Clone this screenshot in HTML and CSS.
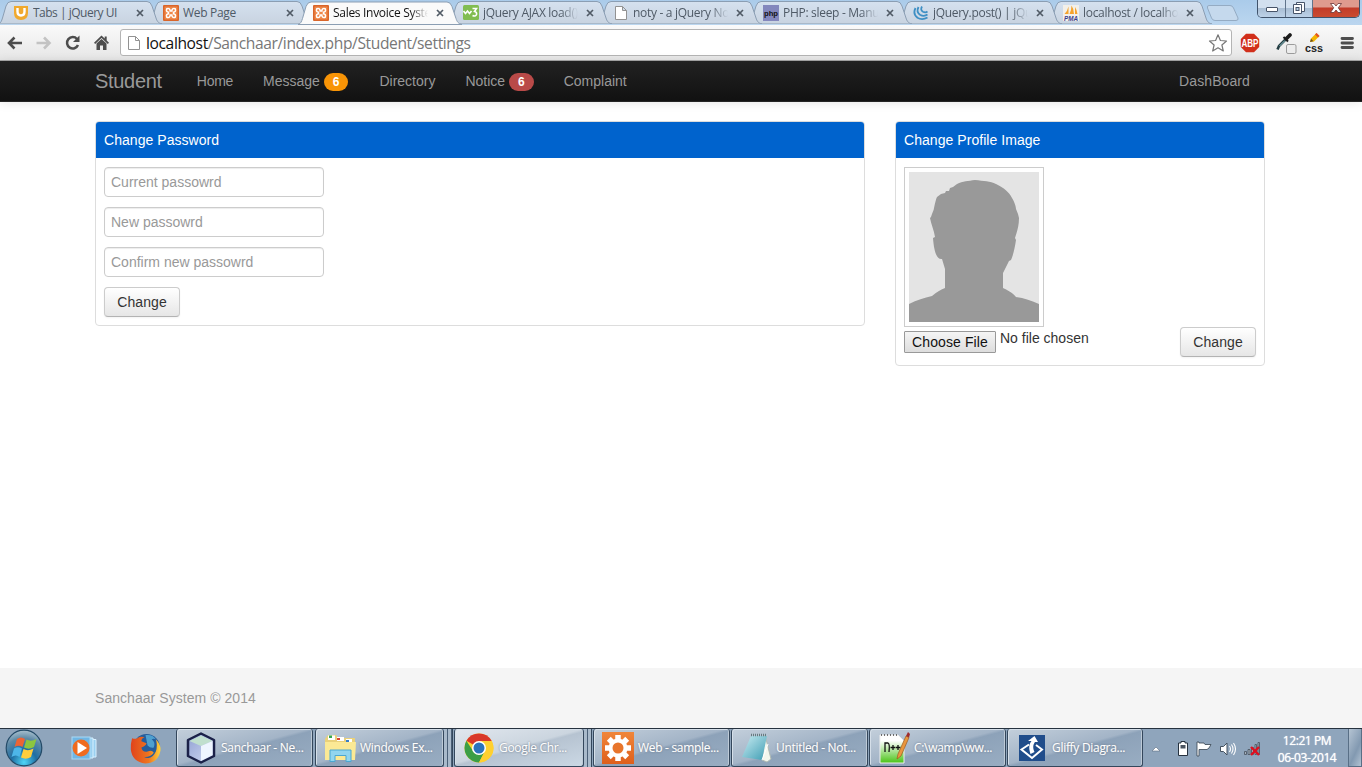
FILE: index.html
```html
<!DOCTYPE html>
<html lang="en">
<head>
<meta charset="utf-8">
<title>Sales Invoice System</title>
<link rel="stylesheet" href="styles.css">
</head>
<body>
<svg class="defs" width="0" height="0">
  <defs>
    <linearGradient id="tabfill" x1="0" y1="0" x2="0" y2="1"><stop offset="0" stop-color="#d5e1ef"/><stop offset="1" stop-color="#c8d3e0"/></linearGradient>
    <linearGradient id="orange" x1="0" y1="0" x2="0" y2="1"><stop offset="0" stop-color="#f0863a"/><stop offset="1" stop-color="#de5f1c"/></linearGradient>
    <radialGradient id="orb" cx=".5" cy=".9" r=".9"><stop offset="0" stop-color="#4fd6f7"/><stop offset=".4" stop-color="#1f6ea3"/><stop offset=".75" stop-color="#5f8aa6"/><stop offset="1" stop-color="#a9c0ce"/></radialGradient>
    <linearGradient id="fox" x1="0" y1="0" x2="1" y2="0"><stop offset="0" stop-color="#e0431c"/><stop offset=".6" stop-color="#ee7520"/><stop offset="1" stop-color="#ffd33a"/></linearGradient>
    <linearGradient id="note" x1="0" y1="0" x2="1" y2="1"><stop offset="0" stop-color="#c9ecf2"/><stop offset="1" stop-color="#3e9db3"/></linearGradient>
    <linearGradient id="green" x1="0" y1="0" x2="0" y2="1"><stop offset=".2" stop-color="#fff"/><stop offset="1" stop-color="#49c316"/></linearGradient>
    <linearGradient id="cube" x1="0" y1="0" x2="1" y2="1"><stop offset="0" stop-color="#8f9fd2"/><stop offset="1" stop-color="#d3dcf3"/></linearGradient>
    <symbol id="shape" viewBox="0 0 164 24"><path d="M0 24C3 23 3.500 21 4.500 18L8 6Q9.500 1.500 13 1.500H149Q152.500 1.500 154 6L158 18C159 21 160 23 164 24Z"/></symbol>
    <symbol id="x" viewBox="0 0 8 8"><path d="M1 1L7 7M7 1L1 7" stroke="currentColor" stroke-width="1.700" fill="none"/></symbol>
    <symbol id="xampp" viewBox="0 0 16 16"><rect width="16" height="16" rx="1" fill="#d9652a"/><rect x="1.500" y="1.500" width="13" height="13" fill="#ef8748"/><path d="M3.800 3.800C6 2.800 7 4 7.200 6H8.800C9 4 10 2.800 12.200 3.800C13.200 6 12 7 10.500 7.200V8.800C12 9 13.200 10 12.200 12.200C10 13.200 9 12 8.800 10H7.200C7 12 6 13.200 3.800 12.200C2.800 10 4 9 5.500 8.800V7.200C4 7 2.800 6 3.800 3.800Z" fill="none" stroke="#fff" stroke-width="1.500"/></symbol>
    <symbol id="file" viewBox="0 0 12 16"><path d="M.5 1.500H7.500L11.500 5.500V14.500H.5ZM7.500 1.500V5.500H11.500" fill="#fff" stroke="#929292"/></symbol>
  </defs>
</svg>

<header class="tabstrip">
  <div class="tab"><svg class="shape"><use href="#shape"/></svg>
    <svg class="fav" viewBox="0 0 16 16"><path d="M1 1H15V8Q15 15 8 15T1 8Z" fill="#f0a92e"/><path d="M4.500 3V6.500Q4.500 10.500 8 10.500T11.500 6.500V3" fill="none" stroke="#fff" stroke-width="2.400"/></svg>
    <span class="title tight">Tabs | jQuery UI</span><svg class="close"><use href="#x"/></svg></div>
  <div class="tab"><svg class="shape"><use href="#shape"/></svg>
    <svg class="fav"><use href="#xampp"/></svg><span class="title">Web Page</span><svg class="close"><use href="#x"/></svg></div>
  <div class="tab active"><svg class="shape"><use href="#shape"/></svg>
    <svg class="fav"><use href="#xampp"/></svg><span class="title fade">Sales Invoice System</span><svg class="close"><use href="#x"/></svg></div>
  <div class="tab"><svg class="shape"><use href="#shape"/></svg>
    <svg class="fav" viewBox="0 0 16 16"><rect width="16" height="15" rx="1.500" fill="#82bd51"/><path d="M.5 6L2.500 8.500L4.500 6L6.500 8.500L8.500 6M9.500 3.500H13.500L11.500 6.500Q14 7 13.500 9.500Q12.500 12 9.500 10.500" fill="none" stroke="#fff" stroke-width="1.600"/></svg>
    <span class="title fade">jQuery AJAX load()</span><svg class="close"><use href="#x"/></svg></div>
  <div class="tab"><svg class="shape"><use href="#shape"/></svg>
    <svg class="fav"><use href="#file"/></svg><span class="title fade">noty - a jQuery Not</span><svg class="close"><use href="#x"/></svg></div>
  <div class="tab"><svg class="shape"><use href="#shape"/></svg>
    <svg class="fav" viewBox="0 0 16 16"><rect width="16" height="16" fill="#8387bd"/><text x="1" y="10.500" textLength="14" lengthAdjust="spacingAndGlyphs" class="phpmark">php</text></svg>
    <span class="title fade">PHP: sleep - Manual</span><svg class="close"><use href="#x"/></svg></div>
  <div class="tab"><svg class="shape"><use href="#shape"/></svg>
    <svg class="fav" viewBox="0 0 16 16"><g fill="none" stroke="#3d8fc4" stroke-width="1.800"><path d="M2.500 3Q-.5 9 4.500 12.700Q9 15.500 14.500 12.500"/><path d="M5.500 2Q3 7 7 9.700Q11 12 14.500 9.500"/><path d="M9 1.500Q7 5 10 6.700Q12.500 8 14.500 6.500"/></g></svg>
    <span class="title fade">jQuery.post() | jQu</span><svg class="close"><use href="#x"/></svg></div>
  <div class="tab"><svg class="shape"><use href="#shape"/></svg>
    <svg class="fav" viewBox="0 0 16 16"><rect width="16" height="16" fill="#f3f0e9"/><path d="M1.500 9Q4.500 6 5.500 1.500V9ZM6.500 9Q8.500 5 8.500 .5Q11 4 11 9ZM12 9V2Q14 5 14.500 9Z" fill="#f5a32c"/><text x="1" y="15.500" textLength="14" lengthAdjust="spacingAndGlyphs" class="pmamark">PMA</text></svg>
    <span class="title fade">localhost / localho</span><svg class="close"><use href="#x"/></svg></div>
  <svg class="newtab" viewBox="0 0 34 18"><path d="M3 1.500H24Q26.500 1.500 27.500 4L32 14Q32.500 16.500 30 16.500H9Q6.500 16.500 5.500 14L1.500 4Q.8 1.500 3 1.500Z" fill="#c5d9ed" stroke="#94abc3"/></svg>
  <div class="winctl">
    <span class="wbtn min"><svg viewBox="0 0 14 14"><rect x="1.500" y="6.500" width="11" height="4" rx=".5" fill="#fff" stroke="#475469"/></svg></span>
    <span class="wbtn max"><svg viewBox="0 0 14 14"><path d="M4.500 1.500H12.500V10.500H4.500Z" fill="#fff" stroke="#475469"/><path d="M1.500 3.500H9.500V12.500H1.500Z" fill="#fff" stroke="#475469"/><rect x="4" y="6.500" width="3" height="3" fill="#bcd0e4" stroke="#475469"/></svg></span>
    <span class="wbtn quit"><svg viewBox="0 0 14 14"><path d="M1.500 2.500H5L7 5L9 2.500H12.500L9.300 6.800L12.500 11.500H9L7 9L5 11.500H1.500L4.700 6.800Z" fill="#fff" stroke="#6b3535" stroke-width=".8"/></svg></span>
  </div>
</header>

<div class="toolbar">
  <svg class="nav" viewBox="0 0 18 18"><path d="M17 9H4M9.500 3.500L4 9L9.500 14.500" fill="none" stroke="#4d4d4d" stroke-width="2.600"/></svg>
  <svg class="nav" viewBox="0 0 18 18"><path d="M2.500 9H15.500M10 3.500L15.500 9L10 14.500" fill="none" stroke="#c3c3c3" stroke-width="2.600"/></svg>
  <svg class="nav" viewBox="0 0 18 18"><path d="M14 5A5.700 5.700 0 1 0 15 11" fill="none" stroke="#4d4d4d" stroke-width="2.500"/><path d="M16.500 1.500V8H10Z" fill="#4d4d4d"/></svg>
  <svg class="nav" viewBox="0 0 18 18"><path d="M9.500 1.500L2 8.700L3.200 9.900L9.500 4L15.800 9.900L17 8.700L14.700 6.500V2.500H12.700V4.500ZM4.500 9.500L9.500 4.900L14.500 9.500V16H11V11.500H8V16H4.500Z" fill="#4d4d4d"/></svg>
  <div class="omnibox">
    <svg class="page"><use href="#file"/></svg>
    <span class="url"><b>localhost</b>/Sanchaar/index.php/Student/settings</span>
    <svg class="star" viewBox="0 0 20 20"><path d="M10 1.800L12.400 7.500L18.500 8L13.900 12L15.300 18L10 14.800L4.700 18L6.100 12L1.500 8L7.600 7.500Z" fill="#fff" stroke="#777" stroke-width="1.200" stroke-linejoin="round"/></svg>
  </div>
  <svg class="abp" viewBox="0 0 20 20"><path d="M6 .8H14L19.200 6V14L14 19.200H6L.8 14V6Z" fill="#d12f1b"/><text x="1.500" y="13.800" textLength="17" lengthAdjust="spacingAndGlyphs" class="abpmark">ABP</text></svg>
  <svg class="dropper" viewBox="0 0 22 22"><path d="M10.500 7.500L4 14L2.500 17.500" fill="none" stroke="#263f44" stroke-width="2.600"/><path d="M10 8.500L4.500 14" stroke="#8dc5cc" stroke-width="1"/><path d="M8.500 5L13 9.500" stroke="#1b1b1b" stroke-width="2"/><path d="M11.500 6.500L15 3" stroke="#1b1b1b" stroke-width="3.800" stroke-linecap="round"/><rect x="11.500" y="12.500" width="9.500" height="9" rx="1.500" fill="#ececec" stroke="#9b9b9b"/></svg>
  <svg class="css" viewBox="0 0 20 20"><path d="M6 9L7 5.500L12.500 0L15.500 3L10 8.500Z" fill="#f4b400"/><path d="M12.500 0L15.500 3L14 4.500L11 1.500Z" fill="#e2502d"/><path d="M6 9L7 5.800L9.500 8.200Z" fill="#6b501d"/><text x="1" y="18.500" textLength="18" lengthAdjust="spacingAndGlyphs" class="cssmark">css</text></svg>
  <svg class="menu" viewBox="0 0 14 14"><path d="M2 2.500H12.500M2 7H12.500M2 11.500H12.500" stroke="#4e4e4e" stroke-width="2.800" stroke-linecap="round"/></svg>
</div>

<nav class="navbar">
  <div class="container">
    <a class="brand">Student</a>
    <a class="link home">Home</a>
    <a class="link message">Message <span class="badge warn">6</span></a>
    <a class="link">Directory</a>
    <a class="link">Notice <span class="badge danger">6</span></a>
    <a class="link">Complaint</a>
    <a class="link right">DashBoard</a>
  </div>
</nav>

<main class="container content">
  <section class="panel wide">
    <h3>Change Password</h3>
    <form class="pad">
      <input type="password" placeholder="Current passowrd">
      <input type="password" placeholder="New passowrd">
      <input type="password" placeholder="Confirm new passowrd">
      <button type="button" class="btn">Change</button>
    </form>
  </section>
  <section class="panel narrow">
    <h3>Change Profile Image</h3>
    <div class="pad">
      <div class="thumb">
        <svg width="130" height="150" viewBox="0 0 130 150"><rect width="130" height="150" fill="#e4e4e4"/><path d="M0 132C8 128 15 126 23 124C28 120 31 118 36 116V97L33 87C28 88 25 80 24 66L26 65C25 58 22 52 21 46L22 45C23 41 25 38 25 36C26 31 27 27 28 25L32 22L36 21L37 19H40L41 16L44 15L48 12C54 9 59 9 66 8C75 9 81 9 87 12C95 16 100 20 103 26C106 31 107 35 107 37L109 42L110 46C110 54 108 60 106 66L107 68C106 75 104 84 102 88L100 89L94 101V116C98 118 103 120 107 125C115 126 123 129 130 132V150H0Z" fill="#999"/></svg>
      </div>
      <div class="upload">
        <span class="choose">Choose File</span><span class="nofile">No file chosen</span>
        <button type="button" class="btn">Change</button>
      </div>
    </div>
  </section>
</main>

<footer class="footer"><div class="container">Sanchaar System © 2014</div></footer>

<div class="taskbar">
  <div class="pins">
    <svg class="orb" viewBox="0 0 38 38"><circle cx="19" cy="19" r="17.800" fill="url(#orb)" stroke="#244b68" stroke-width="1.200"/><path d="M12 10Q16 7 20 10L17.500 18Q13.500 15.500 9.500 18Z" fill="#ed6434"/><path d="M21.500 10.500Q26 13 31.500 10L29 18Q24 21 19 18.500Z" fill="#8cc63f"/><path d="M9 19.500Q13 17 17 19.500L14.500 28Q11 25 6.500 28Z" fill="#4db6e9"/><path d="M18.500 20Q23 22.500 28.500 19.500L26 28Q21 31 16 28.500Z" fill="#ffce3c"/></svg>
    <svg class="wmp" viewBox="0 0 26 26"><path d="M18 3H22V23H18M22 4.500H25V22H22" fill="#9bd0f0" stroke="#d7f0ff"/><rect x="1" y="2" width="18" height="22" fill="#70b6e4" stroke="#a9d9f5"/><circle cx="10" cy="13" r="8.500" fill="#ef6b1f"/><path d="M6.500 7L16 13L6.500 19Z" fill="#fff"/></svg>
    <svg class="fox" viewBox="0 0 30 30"><circle cx="16" cy="14" r="13" fill="#255d9d"/><path d="M15 2Q22 1 25 6Q23 5 21 6Q25 9 23 14Q20 15 17 12Z" fill="#4fa0cf"/><path d="M2 5Q5 6 7 5Q10 3 14 4Q11 5 11 8L16 10Q15 13 11 14Q12 19 17 18Q21 16 23 19Q19 24 13 23Q21 27 25 18Q27 12 25 6Q30 11 29.500 17Q27 29.500 15 29.500Q2 28 .8 16Q.5 10 2 5Z" fill="url(#fox)"/></svg>
  </div>

  <div class="task w1"><svg viewBox="0 0 32 32"><path d="M16 1.500L29 8V24L16 30.500L3 24V8Z" fill="url(#cube)" stroke="#1b2148" stroke-width="2.500" stroke-linejoin="round"/><path d="M4.500 9L16 3.500L27.500 9L16 14Z" fill="#c0dfce"/><path d="M16 14L27.500 9V23L16 28.800Z" fill="#eef5ff"/></svg><span>Sanchaar - Ne...</span></div>
  <div class="task w2"><svg viewBox="0 0 32 32"><path d="M1 7L4 3H12L14 6H31V28H1Z" fill="#ead17a"/><path d="M4 3.500H11V8H4ZM13 5H20V9H13ZM22 7H28V10H22Z" fill="#fff"/><path d="M5 3.500H8V6H5Z" fill="#35a853"/><path d="M13 6H16V8H13Z" fill="#dc4332"/><path d="M22 8H25V10H22Z" fill="#397fc5"/><path d="M1 10H32L31 28H1Z" fill="#fbe995"/><path d="M6 18H27V29.500H22V23.500H11V29.500H6Z" fill="#91d5ef" stroke="#4ba7d1"/></svg><span>Windows Ex...</span></div>
  <i class="stack"></i>
  <div class="task w3 current"><svg viewBox="0 0 32 32"><circle cx="16" cy="16" r="14.500" fill="#ffd02f"/><path d="M16 16L3.400 8.800A14.500 14.500 0 0 1 28.600 8.800Z" fill="#d93829"/><path d="M3.400 8.800A14.500 14.500 0 0 0 16 30.500L22 19L16 22L10 19Z" fill="#3b9e46"/><path d="M16 9H28.700A14.500 14.500 0 0 1 16 30.500L22 19Z" fill="#ffd02f"/><circle cx="16" cy="16" r="7" fill="#fff"/><circle cx="16" cy="16" r="5.500" fill="#2b73bd"/></svg><span>Google Chr...</span></div>
  <i class="stack"></i>
  <div class="task w4"><svg viewBox="0 0 32 32"><rect x="0" y="0" width="32" height="32" fill="url(#orange)"/><g stroke="#fff" stroke-width="5.500"><path d="M16 3V29M3 16H29M6.800 6.800L25.200 25.200M25.200 6.800L6.800 25.200"/></g><circle cx="16" cy="16" r="9.500" fill="#fff"/><circle cx="16" cy="16" r="5.500" fill="#e8752c"/></svg><span>Web - sample...</span></div>
  <div class="task w4"><svg viewBox="0 0 32 32"><path d="M25 3L31 27L27 30L22 28Z" fill="#f4f7ed" stroke="#b0bab3"/><path d="M11 4H27L22 28L2 25Z" fill="url(#note)"/><path d="M11 3H27" stroke="#667b80" stroke-width="2.500" stroke-dasharray="1 1"/><path d="M22 28L28 12" stroke="#fff"/></svg><span>Untitled - Not...</span></div>
  <div class="task w4"><svg viewBox="0 0 32 32"><path d="M2 3H20L26 9V31H2Z" fill="url(#green)" stroke="#eee"/><path d="M3 3H20" stroke="#444" stroke-dasharray="1 2" stroke-width="1.500"/><path d="M7 20V11H10Q12 12 11 20M15 13V18M12.500 15.500H17.500M20 13V18M18 15.500H22.500" stroke="#111" fill="none" stroke-width="1.300"/><path d="M19 27L20 22L28 4L31 5.500L23 24Z" fill="#e9963e" stroke="#9c5b21" stroke-width=".7"/><path d="M28 4L30 0L32 2L31 5.500Z" fill="#a02c2c"/></svg><span>C:\wamp\ww...</span></div>
  <div class="task w5"><svg viewBox="0 0 32 32"><rect x="3" y="3" width="26" height="26" fill="#204d8b"/><path d="M13 12.500L5.500 17.500L16 26L26 17.500L20 13" fill="none" stroke="#fff" stroke-width="2"/><path d="M14.500 22C12.500 16 13 12 15.500 9H12L18.500 4L22 10H19C16.500 13 17 17 18.500 20Z" fill="#fff"/></svg><span>Gliffy Diagra...</span></div>

  <div class="tray">
    <svg class="up" width="10" height="16" viewBox="0 0 10 16"><path d="M1 10L5 6L9 10Z" fill="#fff" stroke="#5a6c80" stroke-width=".6"/></svg>
    <svg width="12" height="18" viewBox="0 0 12 18"><path d="M4 1.500H8V3H10.500V15.500H1.500V3H4Z" fill="#fff" stroke="#26323f"/><rect x="3.500" y="5" width="5" height="3.500" fill="#4b5561"/></svg>
    <svg width="18" height="18" viewBox="0 0 18 18"><path d="M2 2H4V3H9L10 4.500H16L14 8L12 9.500L10 9.500H4V16H2Z" fill="#fff" stroke="#35424f" stroke-width=".8"/></svg>
    <svg width="18" height="18" viewBox="0 0 18 18"><path d="M1.500 6.500H4.500L8 3V15L4.500 11.500H1.500Z" fill="#fff" stroke="#43515f"/><path d="M10.500 6Q12.500 9 10.500 12M12.500 4.500Q15.500 9 12.500 13.500M14.500 3Q18.500 9 14.500 15" stroke="#fff" stroke-width="1.100" fill="none"/></svg>
    <svg width="18" height="18" viewBox="0 0 18 18"><path d="M1.500 11.500H3.500V14.500H1.500ZM5 9.500H7V14.500H5ZM8.500 7.500H10.500V14.500H8.500ZM12 4.500H13.500V14.500H12ZM15 2.500H16.500V14.500H15Z" fill="#a6b1bd" stroke="#46515d" stroke-width=".8"/><path d="M8 7L16 15M16 7L8 15" stroke="#df0f20" stroke-width="2.400"/></svg>
  </div>
  <div class="clock"><span>12:21 PM</span><span>06-03-2014</span></div>
  <div class="peek"></div>
</div>
</body>
</html>
```

FILE: styles.css
```css
* { box-sizing: border-box; }
body { margin: 0; width: 1362px; height: 767px; overflow: hidden; display: flex; flex-direction: column; background: #fff; color: #333; font: 14px/20px "Liberation Sans", Arial, sans-serif; }
svg { display: block; flex: none; }
.defs { position: absolute; }

/* Browser tabs */
.tabstrip { position: relative; height: 25px; flex: none; display: flex; background: linear-gradient(#aacbea, #bbd6ef); font: 12px/16px "Open Sans", "Noto Sans", sans-serif; letter-spacing: -.3px; }
.tab { position: relative; width: 150px; height: 25px; flex: none; display: flex; align-items: center; padding: 0 6px 0 13px; color: #4f5a66; z-index: 1; }
.tab:nth-child(1) { z-index: 8; }
.tab:nth-child(2) { z-index: 7; }
.tab:nth-child(4) { z-index: 6; }
.tab:nth-child(5) { z-index: 5; }
.tab:nth-child(6) { z-index: 4; }
.tab:nth-child(7) { z-index: 3; }
.shape { position: absolute; left: -2px; top: 0; width: 164px; height: 24px; fill: url(#tabfill); stroke: #8b9eb3; overflow: visible; }
.active { z-index: 9 !important; color: #111; }
.active .shape { fill: #fafafa; height: 25px; }
.fav, .title, .close { position: relative; }
.fav { width: 16px; height: 16px; }
.title { margin-left: 4px; width: 97px; overflow: hidden; white-space: nowrap; }
.tight { letter-spacing: -.5px; }
.fade { -webkit-mask-image: linear-gradient(90deg, #000 80%, transparent 98%); mask-image: linear-gradient(90deg, #000 80%, transparent 98%); }
.close { width: 8px; height: 8px; margin-left: 6px; color: #515b66; }
.phpmark { font: bold 8px "Liberation Sans"; letter-spacing: 0; fill: #111; }
.pmamark { font: italic bold 6.5px "Liberation Sans"; letter-spacing: 0; fill: #39418d; }
.newtab { width: 34px; height: 18px; margin: 4px 0 0 6px; }
.winctl { display: flex; width: 103px; height: 18px; margin: 0 2px 0 auto; border: 1px solid #40536b; border-top: 0; border-radius: 0 0 5px 5px; overflow: hidden; }
.wbtn { display: flex; justify-content: center; align-items: center; border-right: 1px solid #60748b; background: linear-gradient(#d2e0ef 45%, #a9bed4 50%, #bdd2e8); padding-bottom: 1px; }
.wbtn svg { width: 14px; height: 14px; }
.min { width: 28px; }
.max { width: 27px; }
.quit { flex: 1; border: 0; background: linear-gradient(#df9b8e 40%, #c23c29 48%, #ca4b30); }

/* Address bar */
.toolbar { height: 36px; flex: none; display: flex; align-items: center; background: linear-gradient(#fafafa, #e6e6e6); border-bottom: 1px solid #a7a7a7; padding: 0 7px 0 5px; }
.nav { width: 18px; height: 18px; margin-right: 11px; }
.omnibox { display: flex; align-items: center; width: 1112px; height: 27px; margin-left: -1px; padding: 0 3px 0 7px; background: #fff; border: 1px solid #b4b4b4; border-radius: 3px; }
.page { width: 12px; height: 16px; }
.url { margin-left: 6px; color: #777; font: 15.6px/22px "Open Sans", "Noto Sans", sans-serif; letter-spacing: -.39px; }
.url b { font-weight: 400; color: #111; }
.star { width: 20px; height: 20px; margin-left: auto; }
.abp { width: 20px; height: 20px; margin-left: 8px; }
.abpmark { font: bold 10px "Liberation Sans"; fill: #fff; }
.dropper { width: 22px; height: 22px; margin-left: 15px; }
.css { width: 20px; height: 20px; margin-left: 7px; }
.cssmark { font: bold 11px "Liberation Sans"; fill: #222; }
.menu { width: 14px; height: 14px; margin-left: 16px; }

/* Site navigation */
.navbar { height: 41px; flex: none; background: linear-gradient(#222, #111); border-bottom: 1px solid #252525; box-shadow: 0 1px 10px rgba(0, 0, 0, .1); }
.container { width: 1170px; margin: 0 auto; transform: translateX(-1px); }
.navbar .container { display: flex; }
.brand { padding: 10px 20px 10px 0; font-size: 20px; letter-spacing: -.3px; color: #999; }
.link { padding: 10px 15px; color: #999; white-space: nowrap; }
.home { letter-spacing: -.3px; }
.message { margin-right: 1px; }
.right { margin-left: auto; letter-spacing: .1px; }
.badge { display: inline-block; padding: 2px 9px; border-radius: 9px; color: #fff; font-size: 12px; line-height: 14px; font-weight: 700; vertical-align: baseline; }
.warn { background: #f89406; }
.danger { background: #b94a48; }

/* Settings panels */
.content { flex: 1; display: flex; align-items: flex-start; justify-content: space-between; padding-top: 19px; }
.panel { border: 1px solid #ddd; border-radius: 4px; background: #fff; overflow: hidden; }
.wide { width: 770px; }
.narrow { width: 370px; }
.panel h3 { margin: 0; height: 36px; padding: 8px; background: #0063cd; color: #fff; font: inherit; letter-spacing: .05px; }
.pad { margin: 0; padding: 9px 8px 8px; }
input { display: block; width: 220px; height: 30px; margin: 0 0 10px; padding: 4px 6px; border: 1px solid #ccc; border-radius: 4px; box-shadow: inset 0 1px 1px rgba(0, 0, 0, .075); font: inherit; }
input::placeholder { color: #999; }
.btn { display: block; width: 76px; height: 30px; padding: 4px 0; border: 1px solid #ccc; border-bottom-color: #b3b3b3; border-radius: 4px; background: linear-gradient(#fff, #e6e6e6); box-shadow: 0 1px 2px rgba(0, 0, 0, .05); color: #333; font: inherit; letter-spacing: .1px; text-align: center; }
.thumb { width: 140px; height: 160px; padding: 4px; border: 1px solid #ccc; }
.upload { display: flex; }
.choose { width: 92px; height: 22px; margin-top: 4px; border: 1px solid #999; border-radius: 1px; background: linear-gradient(#f5f5f5, #ddd); color: #111; text-align: center; letter-spacing: .1px; }
.nofile { margin: 1px 0 0 4px; }
.upload .btn { margin-left: auto; }
.footer { height: 60px; flex: none; padding-top: 20px; background: #f5f5f5; color: #999; letter-spacing: .05px; }

/* Desktop taskbar */
.taskbar { height: 39px; flex: none; display: flex; border-top: 1px solid #26323f; background: #8fa5bc; color: #fff; font: 12px/16px "Open Sans", "Noto Sans", sans-serif; letter-spacing: -.3px; }
.pins { width: 176px; display: flex; align-items: center; padding-left: 5px; }
.orb { width: 38px; height: 38px; }
.wmp { width: 26px; height: 26px; margin-left: 28px; }
.fox { width: 31px; height: 31px; margin-left: 33px; }
.task { display: flex; align-items: center; height: 38px; margin-right: 2px; padding-left: 8px; border: 1px solid #34475c; border-top: 0; border-radius: 3px; background: linear-gradient(165deg, #c3cfdb, #a3b4c7 48%, #8da2b9 52%, #99adc2); box-shadow: inset 1px 1px 0 #d5dfe9, inset -1px 0 0 #bdcad7; white-space: nowrap; text-shadow: 0 0 2px #43546a, 0 0 1px #fff; }
.task svg { width: 32px; height: 32px; }
.task span { margin-left: 4px; }
.w1 { width: 137px; }
.w2 { width: 129px; margin-right: 0; }
.w3 { width: 130px; margin-right: 0; }
.w4 { width: 137px; margin-right: 1px; }
.w5 { width: 136px; margin-right: 0; }
.current { background: linear-gradient(165deg, #e1e7ee, #cbd5df 48%, #b6c3d1 52%, #cbd8e4); }
.stack { width: 8px; margin-right: 1px; border-right: 1px solid #34475c; background: repeating-linear-gradient(90deg, #a9bacb 0 3px, #4b6078 3px 4px); }
.w2 + .stack { width: 9px; }
.tray { display: flex; align-items: center; gap: 6px; margin-left: 8px; padding-top: 2px; }
.up { margin-right: 10px; }
.clock { width: 74px; margin: 0 0 0 8px; padding-top: 3px; display: flex; flex-direction: column; text-align: center; line-height: 17px; letter-spacing: -.4px; text-shadow: 0 0 1px #fff; transform: translateX(1px); }
.peek { width: 14px; margin-left: auto; border: 1px solid #596f86; border-top: 0; background: linear-gradient(115deg, #b5c4d3, #8299b1 60%, #b3c3d3); }
```
